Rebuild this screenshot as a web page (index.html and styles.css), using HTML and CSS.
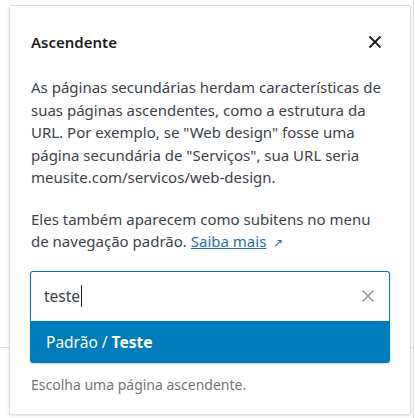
FILE: index.html
```html
<!DOCTYPE html>
<html lang="pt-BR">
<head>
<meta charset="utf-8">
<link rel="stylesheet" href="styles.css">
</head>
<body>
<div class="page">
  <div class="page-rule"></div>
</div>
<div class="popover">
  <div class="header">
    <h2 class="title">Ascendente</h2>
    <button class="close" aria-label="Fechar">
      <svg width="24" height="24" viewBox="0 0 24 24"><path d="M6.5 6.5l11 11M17.5 6.5l-11 11" stroke="#1e1e1e" stroke-width="1.8" fill="none"/></svg>
    </button>
  </div>
  <p class="text">As páginas secundárias herdam características de suas páginas ascendentes, como a estrutura da URL. Por exemplo, se "Web design" fosse uma página secundária de "Serviços", sua URL seria meusite.com/servicos/web-design.</p>
  <p class="text">Eles também aparecem como subitens no menu de navegação padrão. <a class="link" href="#">Saiba mais<span class="ext">&#8599;</span></a></p>
  <div class="combo">
    <div class="field">
      <span class="value">teste</span><span class="caret"></span>
      <span class="clear">
        <svg width="14" height="14" viewBox="0 0 14 14"><path d="M1.5 1.5l11 11M12.5 1.5l-11 11" stroke="#949494" stroke-width="1.6" fill="none"/></svg>
      </span>
    </div>
    <div class="option">Padrão / <strong>Teste</strong></div>
  </div>
  <p class="help">Escolha uma página ascendente.</p>
</div>
</body>
</html>
```
FILE: styles.css
```css
* { box-sizing: border-box; }
html, body { margin: 0; padding: 0; background: #fff; }
body {
  font-family: "Noto Sans", "Open Sans", sans-serif;
  color: #2c3338;
  width: 415px;
  height: 418px;
  overflow: hidden;
  position: relative;
}
.page {
  width: 414px;
  height: 418px;
  border-right: 1px solid #e0e0e0;
  padding-top: 347px;
}
.page-rule {
  height: 1px;
  background: #dcdcde;
}
.popover {
  position: absolute;
  left: 9px;
  top: 5px;
  width: 402px;
  height: 410px;
  background: #fff;
  border: 1px solid #dcdcde;
  border-radius: 3px;
  box-shadow: 0 1px 3px rgba(0,0,0,0.12);
  padding: 20px 20px 0 20px;
}
.header {
  display: flex;
  align-items: center;
  justify-content: space-between;
  height: 32px;
}
.title {
  margin: 0 0 0 1px;
  font-size: 15px;
  font-weight: 600;
  color: #1e1e1e;
}
.close {
  border: 0;
  background: none;
  padding: 0;
  width: 24px;
  height: 24px;
  margin-right: 3px;
  cursor: pointer;
}
.close svg { display: block; }
.text {
  margin: 18px 0 0 1px;
  font-size: 15px;
  line-height: 22.5px;
  color: #3c434a;
}
.text + .text { margin-top: 19px; }
.link {
  color: #2271b1;
  text-decoration: underline;
}
.ext {
  display: inline-block;
  margin-left: 7px;
  color: #2271b1;
  font-size: 12px;
  text-decoration: none;
}
.combo {
  margin-top: 16px;
  border-radius: 3px;
  box-shadow: 0 1px 2px rgba(0,0,0,0.2);
}
.field {
  height: 50px;
  border: 1px solid #007cba;
  border-bottom: 0;
  border-radius: 3px 3px 0 0;
  display: flex;
  align-items: center;
  padding: 0 14px 0 13px;
  font-size: 15.5px;
  color: #3c434a;
}
.caret {
  width: 1px;
  height: 22px;
  background: #1e1e1e;
  margin-left: 1px;
}
.clear {
  margin-left: auto;
  display: flex;
}
.option {
  height: 42px;
  background: #007cba;
  color: #fff;
  display: flex;
  align-items: center;
  padding: 0 16px;
  font-size: 15.5px;
  border-radius: 0 0 3px 3px;
  gap: 4px;
}
.option strong { font-weight: 700; }
.help {
  margin: 12px 0 0 1px;
  font-size: 14px;
  color: #757575;
}
```
